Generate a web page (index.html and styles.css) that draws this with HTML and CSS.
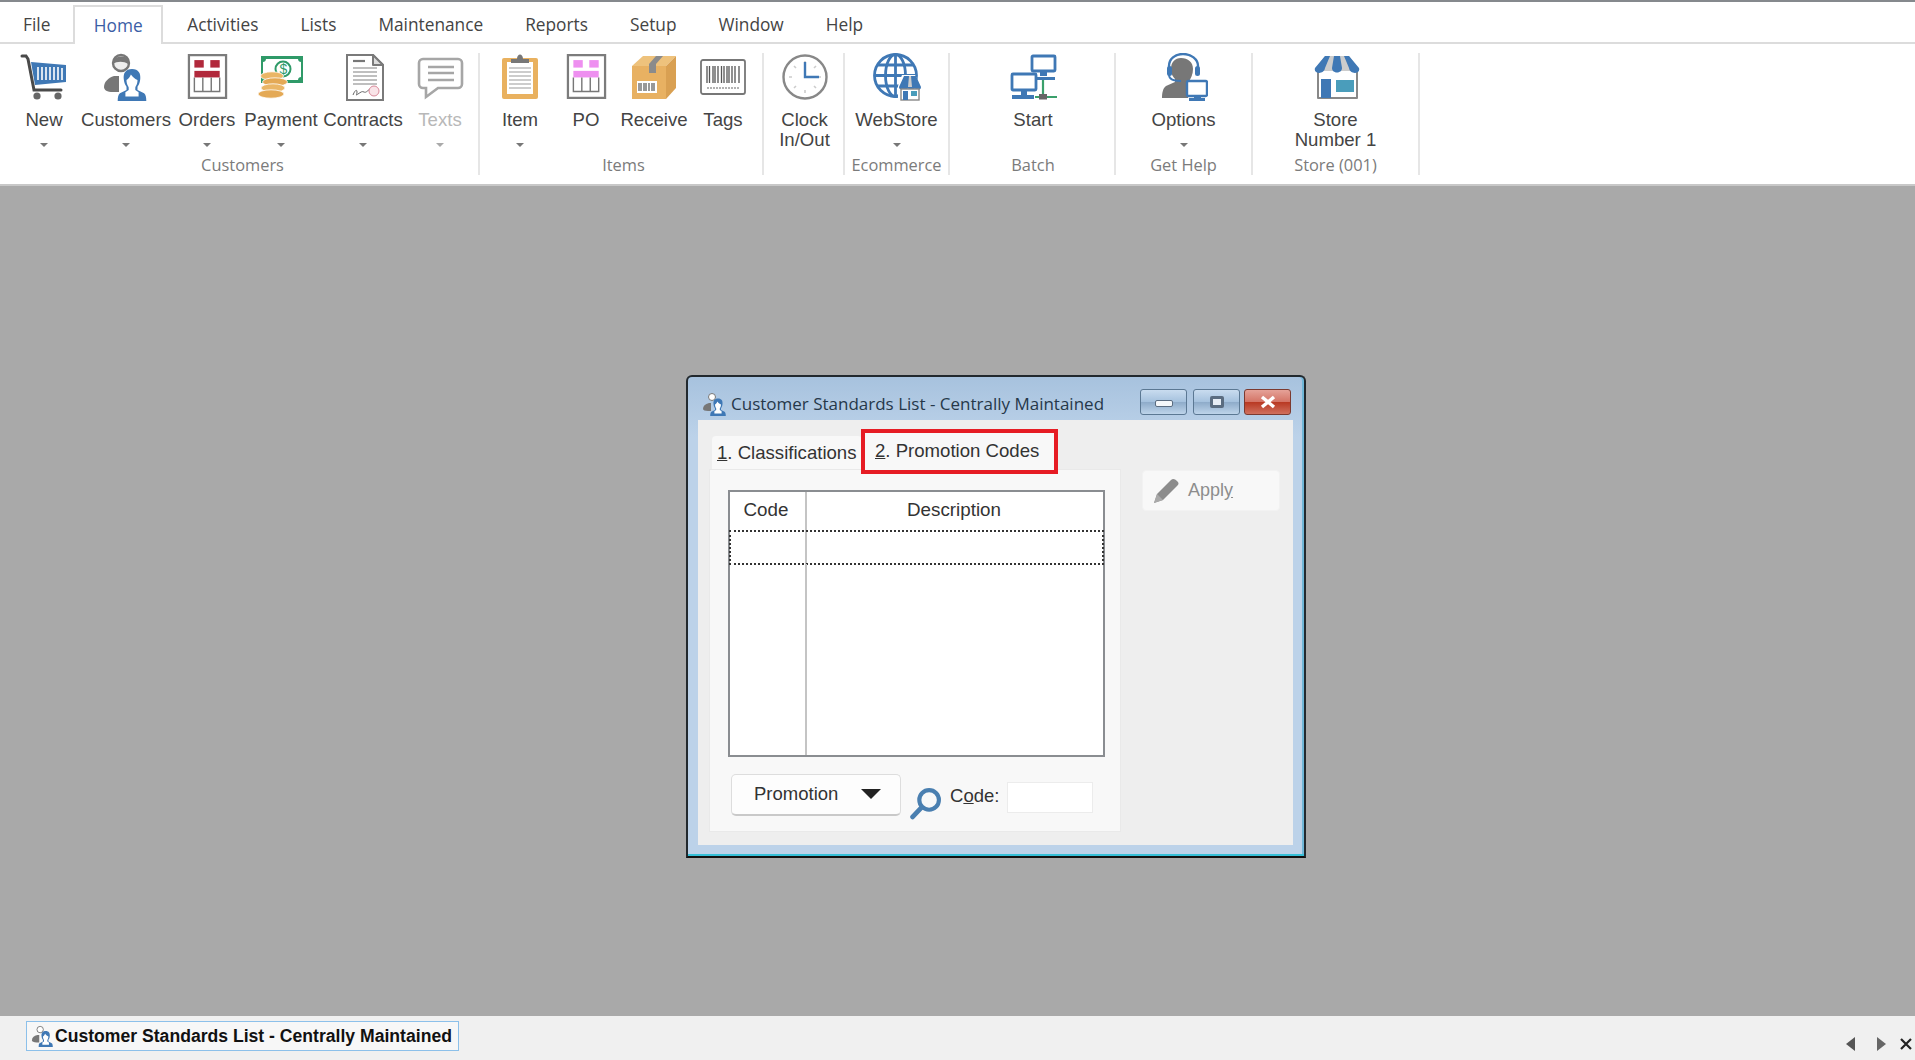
FILE: index.html
```html
<!DOCTYPE html>
<html lang="en">
<head>
    <meta charset="UTF-8">
    <meta name="viewport" content="width=device-width, initial-scale=1.0">
    <title>Customer Standards List</title>
    <link rel="stylesheet" href="styles.css">
</head>
<body>
    <svg class="sprites" width="0" height="0">
        <symbol id="i-orderform" viewBox="0 0 42 48">
            <rect x="1.2" y="1.2" width="39.6" height="45.6" fill="#fff" stroke="#7c7c7c" stroke-width="2.4"/>
            <rect x="7" y="6.5" width="10" height="8" fill="currentColor"/>
            <rect x="24" y="6.5" width="10" height="8" fill="currentColor"/>
            <rect x="7" y="18" width="27" height="7" fill="currentColor"/>
            <path d="M7 25v15h27V25M16 25v15M25 25v15" fill="none" stroke="#777" stroke-width="1.5"/>
        </symbol>
        <symbol id="i-person" viewBox="0 0 26 30">
            <path d="M13 1c-6 0-8 4-7.500 9 .3 3 1 5 2.500 7v3L2 23c-1.500 1-2 4-2 7h26c0-3-.5-6-2-7l-6-3v-3c1.500-2 2.200-4 2.500-7C21 5 19 1 13 1z" fill="#3f78b5"/>
            <path d="M8 11c2-1 3-3 4-5 2 3 4 4 6 5 0 4-2 8-5 8s-5-4-5-8z" fill="#fff"/>
            <path d="M10 17h6v3l3 2v4H7v-4l3-2z" fill="#fff"/>
        </symbol>
    </svg>

    <header class="menu-bar">
        <a class="menu-tab">File</a>
        <a class="menu-tab active">Home</a>
        <a class="menu-tab">Activities</a>
        <a class="menu-tab">Lists</a>
        <a class="menu-tab">Maintenance</a>
        <a class="menu-tab">Reports</a>
        <a class="menu-tab">Setup</a>
        <a class="menu-tab">Window</a>
        <a class="menu-tab">Help</a>
    </header>

    <section class="ribbon">
        <div class="group group-customers">
            <div class="buttons">
                <div class="rb">
                    <svg class="icon" viewBox="0 0 48 48">
                        <path d="M2 3h4l2 3 6 31h27" fill="none" stroke="#4a4a4a" stroke-width="3" stroke-linecap="round"/>
                        <path d="M11 9l35 3v17l-31 3z" fill="#3f78b5"/>
                        <path d="M18 14v13M22 14v13M26 14v13M30 14v13M34 14v13M38 14v13M42 15v12" stroke="#fff" stroke-width="1.600"/>
                        <circle cx="17" cy="43" r="3.600" fill="#666"/><circle cx="38" cy="43" r="3.600" fill="#666"/>
                    </svg>
                    <span class="label">New</span><i class="caret"></i>
                </div>
                <div class="rb">
                    <svg class="icon" viewBox="0 0 48 48">
                        <circle cx="19" cy="10" r="8" fill="#eee" stroke="#777" stroke-width="2.400"/>
                        <path d="M11 7c3-4 13-5 16 0l-1 4c-4-3-11-3-15 0z" fill="#777"/>
                        <path d="M12 23c-6 2-10 6-10 11 0 3 3 5 9 5h6V23z" fill="#777"/>
                        <use href="#i-person" x="13" y="15" width="34" height="33"/>
                    </svg>
                    <span class="label">Customers</span><i class="caret"></i>
                </div>
                <div class="rb">
                    <svg class="icon icon-form icon-red"><use href="#i-orderform"/></svg>
                    <span class="label">Orders</span><i class="caret"></i>
                </div>
                <div class="rb">
                    <svg class="icon" viewBox="0 0 48 48">
                        <rect x="4" y="3" width="42" height="27" fill="#2f9a68"/>
                        <path d="M9 6h32c0 2 1.500 3 3 3v15c-1.500 0-3 1-3 3H9c0-2-1.500-3-3-3V9c1.500 0 3-1 3-3z" fill="#fff"/>
                        <circle cx="26" cy="16" r="7.500" fill="none" stroke="#2f9a68" stroke-width="2"/>
                        <text class="svg-dollar" x="22.500" y="21">$</text>
                        <ellipse cx="15" cy="23" rx="11.500" ry="4.200" fill="#eab666" stroke="#fff" stroke-width=".8"/>
                        <ellipse cx="18" cy="29" rx="12.500" ry="4.200" fill="#e4a955" stroke="#fff" stroke-width=".8"/>
                        <ellipse cx="16" cy="35" rx="12" ry="4.200" fill="#eab666" stroke="#fff" stroke-width=".8"/>
                        <ellipse cx="14" cy="41" rx="13" ry="4.200" fill="#e4a955" stroke="#fff" stroke-width=".8"/>
                    </svg>
                    <span class="label">Payment</span><i class="caret"></i>
                </div>
                <div class="rb">
                    <svg class="icon" viewBox="0 0 48 48">
                        <path d="M8 2h26l10 10v35H8z" fill="#fff" stroke="#7a7a7a" stroke-width="2"/>
                        <path d="M34 2v10h10z" fill="#ddd" stroke="#7a7a7a" stroke-width="2" stroke-linejoin="round"/>
                        <path d="M14 8h12" stroke="#777" stroke-width="2.200"/>
                        <path d="M14 15h24M14 19h24M14 23h24M14 27h24M14 31h24" stroke="#aaa" stroke-width="1.300"/>
                        <path d="M14 42c2-5 4-6 4-3s-2 4 1 2 4-3 6-2 3-1 6-3" fill="none" stroke="#666"/>
                        <circle cx="35" cy="38" r="5" fill="#f9e4e8" stroke="#d98a9a"/>
                    </svg>
                    <span class="label">Contracts</span><i class="caret"></i>
                </div>
                <div class="rb disabled">
                    <svg class="icon" viewBox="0 0 48 48">
                        <path d="M7 6h35a4 4 0 0 1 4 4v21a4 4 0 0 1-4 4H22l-12 9v-9H7a4 4 0 0 1-4-4V10a4 4 0 0 1 4-4z" fill="#fff" stroke="#a6a6a6" stroke-width="2.600"/>
                        <path d="M12 14h26M12 20h26M12 27h26" stroke="#a6a6a6" stroke-width="2.400"/>
                    </svg>
                    <span class="label">Texts</span><i class="caret"></i>
                </div>
            </div>
            <div class="group-name">Customers</div>
        </div>

        <div class="group group-items">
            <div class="buttons">
                <div class="rb">
                    <svg class="icon" viewBox="0 0 48 48">
                        <rect x="6" y="5" width="36" height="41" rx="2" fill="#e9b15f"/>
                        <rect x="11" y="9" width="26" height="32" fill="#fff"/>
                        <path d="M13 15h22M13 19h22M13 23h22M13 27h22M13 31h22M13 35h22" stroke="#999" stroke-width="1.100"/>
                        <path d="M15 10V6h6c0-6 6-6 6 0h6v4z" fill="#777"/>
                    </svg>
                    <span class="label">Item</span><i class="caret"></i>
                </div>
                <div class="rb">
                    <svg class="icon icon-form icon-pink"><use href="#i-orderform"/></svg>
                    <span class="label">PO</span>
                </div>
                <div class="rb">
                    <svg class="icon" viewBox="0 0 48 48">
                        <path d="M2 13L13 3h33L36 13z" fill="#eec27c"/>
                        <path d="M2 13h34v33H2z" fill="#e8b162"/>
                        <path d="M36 13L46 3v32L36 46z" fill="#d9a052"/>
                        <path d="M19 13h7v-2l7-8h-7l-7 8z" fill="#8b8b8b"/><rect x="19" y="13" width="7" height="7" fill="#8b8b8b"/>
                        <rect x="7" y="28" width="20" height="12" fill="#fff"/>
                        <path d="M9 30v8M11 30v8M14 30v8M16 30v8M19 30v8M22 30v8M24 30v8" stroke="#555" stroke-width="1.200"/>
                    </svg>
                    <span class="label">Receive</span>
                </div>
                <div class="rb">
                    <svg class="icon" viewBox="0 0 48 48">
                        <rect x="2" y="7" width="44" height="34" rx="2" fill="#fff" stroke="#777" stroke-width="1.800"/>
                        <path d="M8 13v17M10.500 13v17M14 13v17M16 13v17M19 13v17M22.500 13v17M25 13v17M28 13v17M30 13v17M33 13v17M36 13v17M40 13v17" stroke="#555" stroke-width="1.300"/>
                        <path d="M8 35h32" stroke="#999" stroke-width="1.500" stroke-dasharray="2 1"/>
                    </svg>
                    <span class="label">Tags</span>
                </div>
            </div>
            <div class="group-name">Items</div>
        </div>

        <div class="group group-clock">
            <div class="buttons">
                <div class="rb">
                    <svg class="icon" viewBox="0 0 48 48">
                        <circle cx="24" cy="24" r="21.500" fill="#fff" stroke="#888" stroke-width="2.400"/>
                        <path d="M24 8v3M24 37v3M8 24h3M37 24h3M13 13l2 2M33 33l2 2M13 35l2-2M33 15l2-2" stroke="#ccc" stroke-width="1.600"/>
                        <path d="M24 9v15h14" fill="none" stroke="#3f78b5" stroke-width="2.400"/>
                    </svg>
                    <span class="label">Clock<br>In/Out</span>
                </div>
            </div>
            <div class="group-name"></div>
        </div>

        <div class="group group-ecom">
            <div class="buttons">
                <div class="rb">
                    <svg class="icon" viewBox="0 0 48 48">
                        <g fill="none" stroke="#3f78b5" stroke-width="2.800">
                            <circle cx="22.500" cy="22.500" r="21"/>
                            <ellipse cx="22.500" cy="22.500" rx="10" ry="21"/>
                            <path d="M22.500 2v41M2 22.500h41M5 12h35M5 33h35"/>
                        </g>
                        <path d="M29 22h13l6 11v15H25V33z" fill="#fff"/>
                        <path d="M26 34l5-11h12l5 11c0 4-6 4-6 1 0 3-7 3-7 0 0 3-9 3-9-1z" fill="#3f78b5"/>
                        <path d="M36 23h2l1 11h-4z" fill="#ccc"/>
                        <rect x="28" y="36" width="18" height="11" fill="#fff" stroke="#888" stroke-width="1.400"/>
                        <rect x="30" y="38" width="5" height="9" fill="#3f78b5"/><rect x="38" y="38" width="6" height="5" fill="#4a9dbb"/>
                    </svg>
                    <span class="label">WebStore</span><i class="caret"></i>
                </div>
            </div>
            <div class="group-name">Ecommerce</div>
        </div>

        <div class="group group-batch">
            <div class="buttons">
                <div class="rb">
                    <svg class="icon" viewBox="0 0 48 48">
                        <g fill="#fff" stroke="#3f78b5" stroke-width="2.800">
                            <rect x="23" y="3" width="23" height="15" rx="1"/>
                            <rect x="3" y="21" width="24" height="16" rx="1"/>
                        </g>
                        <path d="M31 18h7v5h-7zM26 24h20v3H26zM12 37h6v5h-6zM3 42h22v4H3z" fill="#3f78b5"/>
                        <path d="M34 27v15M26 44h22" stroke="#3aa06b" stroke-width="2.200"/>
                        <rect x="30" y="41" width="8" height="5.500" fill="#666"/>
                    </svg>
                    <span class="label">Start</span>
                </div>
            </div>
            <div class="group-name">Batch</div>
        </div>

        <div class="group group-help">
            <div class="buttons">
                <div class="rb">
                    <svg class="icon" viewBox="0 0 48 48">
                        <path d="M21 5c-6 0-10 4-10 11 0 5 2 8 4 10v3L6 33c-3 2-4 7-4 12h26V29c3-3 5-8 5-13 0-7-5-11-12-11z" fill="#777"/>
                        <path d="M9 18v-5C9 6 15 1 23 1s15 5 15 12v5" fill="none" stroke="#3f78b5" stroke-width="2.400"/>
                        <rect x="7" y="13" width="5" height="10" rx="2.500" fill="#3f78b5"/><rect x="35" y="13" width="5" height="10" rx="2.500" fill="#3f78b5"/>
                        <path d="M9 22c0 4 5 6 12 6" fill="none" stroke="#3f78b5" stroke-width="1.800"/>
                        <rect x="27" y="28" width="20" height="15" rx="1.500" fill="#fff" stroke="#3f78b5" stroke-width="2.400"/>
                        <path d="M34 43h7v2h-7zM29 45h16v3H29z" fill="#3f78b5"/>
                    </svg>
                    <span class="label">Options</span><i class="caret"></i>
                </div>
            </div>
            <div class="group-name">Get Help</div>
        </div>

        <div class="group group-store">
            <div class="buttons">
                <div class="rb">
                    <svg class="icon" viewBox="0 0 48 48">
                        <path d="M6 18v27h39V18" fill="#fff" stroke="#888" stroke-width="2" stroke-linejoin="round"/>
                        <path d="M13 3h24l10 13v2H3v-2z" fill="#ccc"/>
                        <path d="M13 3L3 15c-2 6 9 7 10 0l5-12zM22 3l-2 12c0 6 10 6 10 0L28 3zM37 3l10 12c2 6-9 7-10 0L32 3z" fill="#3f78b5"/>
                        <rect x="9" y="26" width="10" height="19" fill="#3f78b5"/>
                        <rect x="24" y="27" width="18" height="12" fill="#4a9dbb"/>
                    </svg>
                    <span class="label">Store<br>Number 1</span>
                </div>
            </div>
            <div class="group-name">Store (001)</div>
        </div>
    </section>

    <main class="workspace">
        <div class="window">
            <div class="title-bar">
                <svg class="title-icon" viewBox="0 0 24 24">
                    <circle cx="10" cy="5" r="3.500" fill="#fff" stroke="#777"/>
                    <path d="M7 11c-4 1-6 3-6 6 0 1 2 2 5 2h3v-8z" fill="#777"/>
                    <use href="#i-person" x="8" y="6" width="16" height="18"/>
                </svg>
                <span class="title-text">Customer Standards List - Centrally Maintained</span>
                <div class="win-buttons">
                    <div class="win-btn"><i class="glyph-min"></i></div>
                    <div class="win-btn"><i class="glyph-max"></i></div>
                    <div class="win-btn close">
                        <svg width="18" height="14" viewBox="0 0 18 14"><path d="M3 2l12 10M15 2L3 12" stroke="#fff" stroke-width="3.400"/></svg>
                    </div>
                </div>
            </div>
            <div class="win-body">
                <div class="tab-area">
                    <div class="tab-strip">
                        <div class="tab"><u>1</u>. Classifications</div>
                        <div class="tab current"><u>2</u>. Promotion Codes</div>
                    </div>
                    <div class="tab-panel">
                        <div class="list">
                            <div class="list-head">
                                <div class="col-code">Code</div>
                                <div class="col-desc">Description</div>
                            </div>
                            <div class="list-row">
                                <div class="col-code"></div>
                                <div class="col-desc"></div>
                            </div>
                            <div class="list-fill">
                                <div class="col-code"></div>
                                <div class="col-desc"></div>
                            </div>
                        </div>
                        <div class="search-row">
                            <div class="dropdown">
                                <span>Promotion</span>
                                <i class="drop-arrow"></i>
                            </div>
                            <svg class="magnifier" viewBox="0 0 32 32">
                                <circle cx="19.500" cy="12.500" r="9.500" fill="none" stroke="#4a7fb0" stroke-width="4"/>
                                <path d="M12 20L3.500 29" stroke="#4a7fb0" stroke-width="4.600" stroke-linecap="round"/>
                            </svg>
                            <label class="code-label">C<u>o</u>de:</label>
                            <input class="code-input" type="text">
                        </div>
                    </div>
                </div>
                <div class="side">
                    <div class="apply">
                        <svg width="28" height="28" viewBox="0 0 28 28">
                            <path d="M2 26l3-9L19 3c2-2 4-1 6 1s2 3 0 5L11 23z" fill="#8c8c8c"/>
                            <path d="M2 26l3-9 6 6z" fill="#a9a9a9"/>
                        </svg>
                        <span>Appl<u>y</u></span>
                    </div>
                </div>
            </div>
        </div>
    </main>

    <footer class="taskbar">
        <div class="task-item">
            <svg class="task-icon" viewBox="0 0 24 24">
                <circle cx="10" cy="5" r="3.500" fill="#fff" stroke="#777"/>
                <path d="M7 11c-4 1-6 3-6 6 0 1 2 2 5 2h3v-8z" fill="#777"/>
                <use href="#i-person" x="8" y="6" width="16" height="18"/>
            </svg>
            <span>Customer Standards List - Centrally Maintained</span>
        </div>
        <div class="task-nav">
            <i class="nav-left"></i>
            <i class="nav-right"></i>
            <svg width="12" height="12" viewBox="0 0 12 12"><path d="M1 1l10 10M11 1L1 11" stroke="#222" stroke-width="2.200"/></svg>
        </div>
    </footer>
</body>
</html>
```

FILE: styles.css
```css
* { box-sizing: border-box; }
html, body { height: 100%; }
body { margin: 0; height: 100vh; overflow: hidden; display: flex; flex-direction: column; background: #fff; color: #333; font-family: "Liberation Sans", Arial, sans-serif; }
.sprites { position: absolute; }

/* top menu */
.menu-bar { flex: 0 0 44px; display: flex; align-items: flex-end; padding-left: 2px; border-top: 2px solid #85898d; border-bottom: 2px solid #dcdcdc; font-family: "Open Sans", sans-serif; font-size: 17.300px; color: #444; }
.menu-tab { height: 39px; line-height: 39px; padding: 0 21px; margin-bottom: -2px; }
.menu-tab.active { color: #3b5ea6; background: #fff; border: 2px solid #dcdcdc; border-bottom: 0; padding: 0 18.500px; margin-left: 2px; margin-right: 3px; line-height: 37px; }

/* ribbon */
.ribbon { flex: 0 0 142px; display: flex; background: #fff; padding-top: 9px; border-bottom: 2px solid #c8c8c8; }
.group { display: flex; flex-direction: column; height: 122px; border-right: 2px solid #e6e6e6; }
.buttons { flex: 1; display: grid; grid-auto-flow: column; }
.group-name { height: 25px; margin-bottom: -3px; text-align: center; font-family: "Open Sans", sans-serif; font-size: 16.400px; line-height: 24px; color: #7b7b7b; white-space: nowrap; }
.group-customers { width: 480px; }
.group-customers .buttons { grid-template-columns: 80px 84px 78px 70px 94px 60px; padding-left: 4px; }
.group-customers .group-name { padding-left: 7px; }
.group-items { width: 284px; }
.group-items .buttons { grid-template-columns: 60px 72px 64px 74px; padding-left: 10px; }
.group-items .group-name { padding-left: 5px; }
.group-clock { width: 81px; padding-left: 2px; }
.group-ecom { width: 105px; }
.group-batch { width: 166px; padding-left: 2px; }
.group-help { width: 137px; }
.group-store { width: 167px; }

.rb { display: flex; flex-direction: column; align-items: center; min-width: 0; }
.rb .icon { width: 48px; height: 48px; flex: none; }
.rb .icon-form { width: 45px; height: 45px; margin: 1px 0 2px; }
.icon-red { color: #b1283b; }
.icon-pink { color: #ee8ff0; }
.svg-dollar { font-family: "Liberation Sans", sans-serif; font-size: 14px; fill: #2f9a68; }
.label { margin-top: 9px; font-size: 18.600px; line-height: 19.500px; text-align: center; color: #444; white-space: nowrap; }
.caret { margin-top: 13px; width: 0; height: 0; border: 4px solid transparent; border-top: 4px solid #777; border-bottom: 0; }
.disabled .label { color: #b8b8b8; }
.disabled .caret { border-top-color: #aaa; }

/* grey area holding the child window */
.workspace { flex: 1; position: relative; background: #a9a9a9; }
.window { position: absolute; left: 686px; top: 189px; width: 620px; height: 483px; display: flex; flex-direction: column; padding: 0 11px 11px 10px; border: 2px solid #22292e; border-bottom-color: #111; border-radius: 6px 6px 0 0; background: linear-gradient(#a7c2de, #bcd2e9 60px); box-shadow: inset 0 -2px 0 #35c0d8, inset -2px 0 0 #6fb7d8; }
.title-bar { flex: 0 0 43px; display: flex; align-items: center; padding: 10px 0 0 4px; }
.title-icon { width: 24px; height: 24px; margin-right: 6px; }
.title-text { font-family: "Open Sans", sans-serif; font-size: 17px; color: #26384a; white-space: nowrap; margin-left: -1px; }
.win-buttons { margin-left: auto; display: flex; gap: 6px; margin-right: 2px; margin-top: -4px; }
.win-btn { width: 47px; height: 26px; display: flex; align-items: center; justify-content: center; border: 1px solid #5b7893; border-radius: 3px; background: linear-gradient(#c9dcef 0, #a6c2de 48%, #8facca 52%, #bdd4ea 100%); }
.win-btn.close { margin-left: -2px; background: linear-gradient(#e5a298 0, #d47567 48%, #b93a24 52%, #d0705e 100%); border-color: #7c3a30; }
.glyph-min { display: block; width: 18px; height: 7px; margin-top: 4px; background: #f4f7fa; border: 1px solid #5a6c80; border-radius: 2px; }
.glyph-max { display: block; width: 14px; height: 12px; background: #e6edf5; border: 3px solid #5a6c80; border-radius: 2px; }

.win-body { flex: 1; display: flex; background: #eee; padding-left: 11px; }
.tab-area { width: 412px; display: flex; flex-direction: column; }
.tab-strip { flex: 0 0 49px; display: flex; align-items: flex-end; padding-left: 3px; font-size: 18.600px; color: #333; position: relative; }
.tab { height: 33px; width: 150px; padding-left: 5px; line-height: 34px; background: #f8f8f8; white-space: nowrap; border-radius: 4px 4px 0 0; }
.tab.current { position: absolute; left: 152px; bottom: -5px; width: 197px; height: 45px; padding-left: 10px; line-height: 35px; border: 4px solid #e61c24; border-radius: 0; background: #f8f8f8; }
.tab-panel { flex: 1; margin-bottom: 13px; background: #f8f8f8; border: 1px solid #e9e9e9; padding: 20px 15px 0 18px; display: flex; flex-direction: column; }

.list { width: 377px; height: 267px; flex: none; display: flex; flex-direction: column; background: #fff; border: 2px solid #8a8d91; font-size: 18.800px; color: #333; }
.list-head, .list-row, .list-fill { display: flex; }
.list-head { height: 39px; line-height: 36px; text-align: center; }
.list-row { height: 33px; outline: 2px dotted #333; outline-offset: -1px; }
.list-fill { flex: 1; }
.col-code { width: 77px; flex: none; padding-right: 3px; border-right: 2px solid #c4c4c4; }
.col-desc { flex: 1; padding-right: 2px; }

.search-row { display: flex; align-items: flex-start; margin-top: 17px; margin-left: 3px; }
.dropdown { width: 170px; height: 42px; display: flex; align-items: center; padding: 0 19px 2px 22px; justify-content: space-between; background: #fdfdfd; border: 1px solid #ddd; border-bottom: 2px solid #c9c9c9; border-radius: 5px; font-size: 18.500px; color: #333; }
.drop-arrow { width: 0; height: 0; border: 10px solid transparent; border-top: 10px solid #222; border-bottom: 0; }
.magnifier { width: 33px; height: 33px; margin: 13px 0 0 8px; }
.code-label { margin: 11px 0 0 8px; font-size: 18.500px; color: #333; white-space: nowrap; }
.code-input { width: 86px; height: 31px; margin: 8px 0 0 8px; border: 1px solid #ececec; background: #fff; padding: 0; }

.side { flex: 1; padding: 50px 0 0 21px; }
.apply { width: 138px; height: 41px; display: flex; align-items: center; gap: 8px; padding-left: 9px; background: #f8f8f8; border: 1px solid #f2f2f2; border-radius: 4px; font-size: 18px; color: #8d8d8d; }

/* bottom window list */
.taskbar { flex: 0 0 44px; display: flex; align-items: flex-start; background: #f0f0f0; padding: 5px 0 0 26px; }
.task-item { width: 433px; height: 30px; display: flex; align-items: center; gap: 2px; padding-left: 4px; border: 1.500px solid #8cc0ea; background: #f7f7f7; font-size: 17.600px; font-weight: bold; color: #111; white-space: nowrap; }
.task-icon { width: 22px; height: 22px; flex: none; }
.task-nav { margin-left: auto; margin-top: 16px; display: flex; align-items: center; gap: 14px; padding-right: 3px; }
.task-nav i { display: block; width: 0; height: 0; border-top: 7px solid transparent; border-bottom: 7px solid transparent; }
.nav-left { border-right: 9px solid #555; margin-right: 8px; }
.nav-right { border-left: 9px solid #666; }
```
